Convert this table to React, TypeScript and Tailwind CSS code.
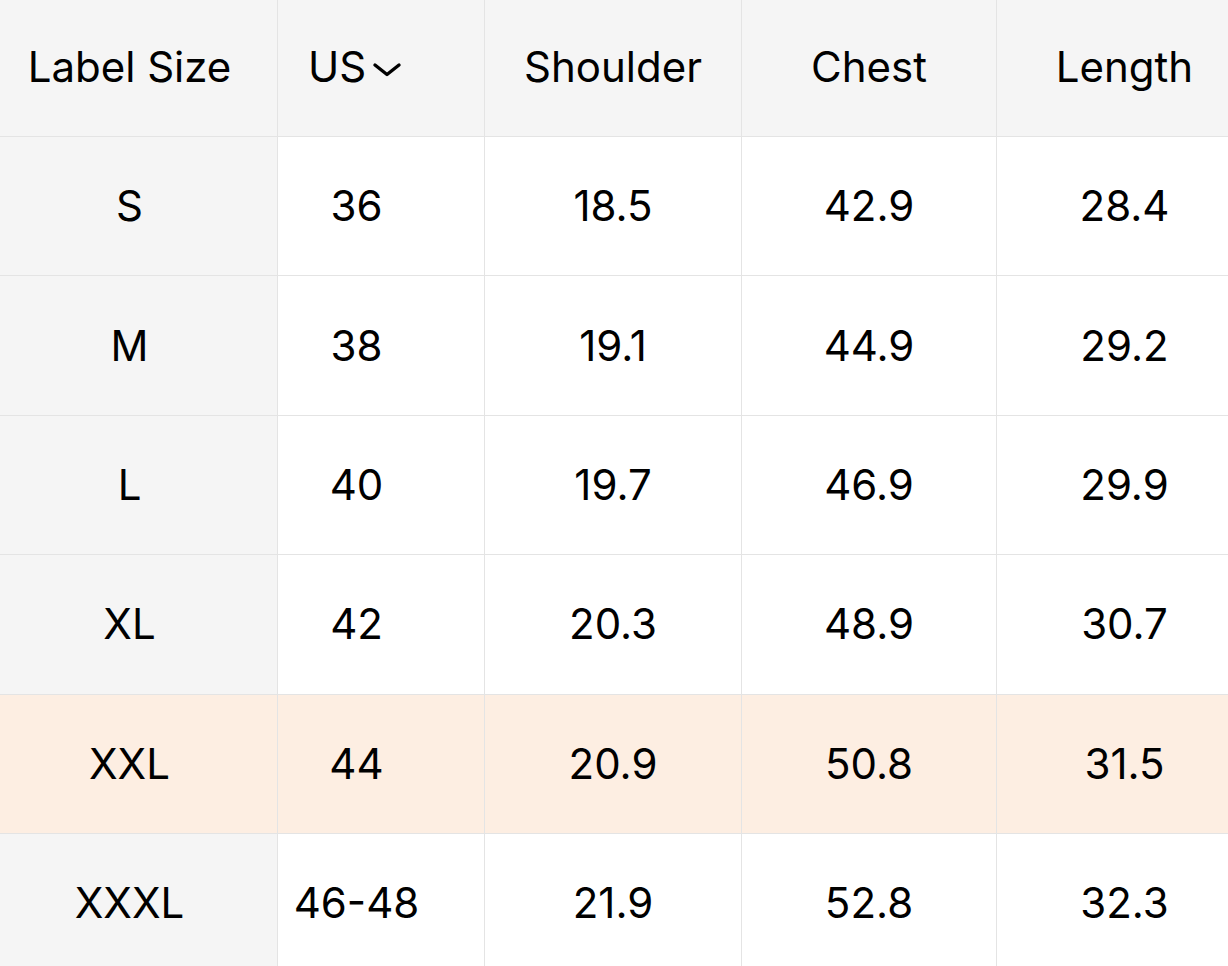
import React from "react";

const rows = [
  ["S", "36", "18.5", "42.9", "28.4"],
  ["M", "38", "19.1", "44.9", "29.2"],
  ["L", "40", "19.7", "46.9", "29.9"],
  ["XL", "42", "20.3", "48.9", "30.7"],
  ["XXL", "44", "20.9", "50.8", "31.5"],
  ["XXXL", "46-48", "21.9", "52.8", "32.3"],
];

function Chevron() {
  return (
    <svg width="30" height="18" viewBox="0 0 30 18" className="ml-[6px] mt-[6px]">
      <path d="M3 4 L15 13.5 L27 4" fill="none" stroke="#000" strokeWidth="3.4" strokeLinecap="round" strokeLinejoin="round" />
    </svg>
  );
}

export default function App() {
  return (
    <div className="w-[1228px] h-[966px] overflow-hidden bg-white text-black" style={{ fontFamily: "Inter, 'Noto Sans', sans-serif" }}>
      <div className="w-[1260px]">
        <div className="grid grid-cols-[278px_207px_257px_255px_263px] h-[137px] bg-[#f5f5f5] border-b border-[#e4e4e4] text-[42px] leading-none">
          <div className="flex items-center justify-center pr-[18px] pb-[2px] border-r border-[#e4e4e4]">Label Size</div>
          <div className="flex items-center justify-center pr-[52px] pb-[2px] border-r border-[#e4e4e4]">
            <span>US</span>
            <Chevron />
          </div>
          <div className="flex items-center justify-center pb-[2px] border-r border-[#e4e4e4]">Shoulder</div>
          <div className="flex items-center justify-center pb-[2px] border-r border-[#e4e4e4]">Chest</div>
          <div className="flex items-center justify-center pb-[2px] pr-[8px]">Length</div>
        </div>
        {rows.map((r, i) => {
          const hl = r[0] === "XXL";
          return (
            <div
              key={i}
              className={`grid grid-cols-[278px_207px_257px_255px_263px] h-[139.4px] border-b border-[#e4e4e4] text-[42px] leading-none ${hl ? "bg-[#fdeee2]" : "bg-white"}`}
            >
              <div className={`flex items-center justify-center pr-[18px] border-r border-[#e4e4e4] ${hl ? "" : "bg-[#f5f5f5]"}`}>{r[0]}</div>
              <div className="flex items-center justify-center pr-[49px] border-r border-[#e4e4e4]">{r[1]}</div>
              <div className="flex items-center justify-center border-r border-[#e4e4e4]">{r[2]}</div>
              <div className="flex items-center justify-center border-r border-[#e4e4e4]">{r[3]}</div>
              <div className="flex items-center justify-center pr-[8px]">{r[4]}</div>
            </div>
          );
        })}
      </div>
    </div>
  );
}
